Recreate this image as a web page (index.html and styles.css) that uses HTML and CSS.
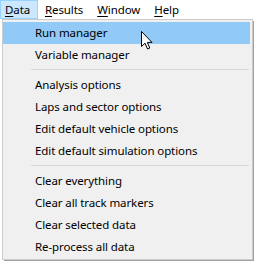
FILE: index.html
```html
<!DOCTYPE html>
<html lang="en">
<head>
  <meta charset="UTF-8">
  <title>Data menu</title>
  <link rel="stylesheet" href="styles.css">
</head>
<body>
  <div class="window">
    <nav class="menubar">
      <span class="menubar-item open"><u>D</u>ata</span>
      <span class="menubar-item"><u>R</u>esults</span>
      <span class="menubar-item"><u>W</u>indow</span>
      <span class="menubar-item"><u>H</u>elp</span>
    </nav>

    <ul class="dropdown">
      <li class="entry hover">Run manager</li>
      <li class="entry">Variable manager</li>
      <li class="divider"></li>
      <li class="entry">Analysis options</li>
      <li class="entry">Laps and sector options</li>
      <li class="entry">Edit default vehicle options</li>
      <li class="entry">Edit default simulation options</li>
      <li class="divider"></li>
      <li class="entry">Clear everything</li>
      <li class="entry">Clear all track markers</li>
      <li class="entry">Clear selected data</li>
      <li class="entry">Re-process all data</li>
    </ul>

    <!-- mouse pointer over the hovered entry -->
    <svg class="cursor" width="12" height="19" viewBox="0 0 12 19">
      <path d="M0.5 0.5 L0.5 15.5 L4 12.2 L6.6 18 L8.8 17 L6.3 11.4 L11 11.4 Z" fill="#fff" stroke="#000" stroke-width="1" stroke-linejoin="miter" />
    </svg>
  </div>
</body>
</html>
```

FILE: styles.css
```css
* {
  margin: 0;
  padding: 0;
  box-sizing: border-box;
}

body {
  font-family: "Noto Sans", "Open Sans", sans-serif;
  font-size: 11.5px;
  letter-spacing: -0.1px;
  color: #000;
  background: #ffffff;
  width: 254px;
  height: 261px;
  overflow: hidden;
}

.window {
  position: relative;
  width: 254px;
  height: 261px;
}

/* Top menu bar */
.menubar {
  display: flex;
  height: 19px;
  background: #ffffff;
}

.menubar-item {
  height: 19px;
  line-height: 17px;
  padding: 0 6px;
  border: 1px solid transparent;
}

.menubar-item:first-child {
  padding-left: 4px;
  width: 38px;
}

.menubar-item u {
  text-decoration-thickness: 1px;
  text-underline-offset: 2px;
}

.menubar-item.open {
  background: #cce8ff;
  border-color: #99d1ff;
}

/* Drop-down list */
.dropdown {
  list-style: none;
  margin-left: 2px;
  width: 251px;
  height: 241px;
  padding: 2px 2px 2px 0;
  background: #f0f0f0;
  border: 1px solid #cccccc;
  box-shadow: 2px 2px 0 #a0a0a0;
}

.entry {
  height: 22px;
  line-height: 22px;
  padding-left: 32px;
  white-space: nowrap;
}

.entry.hover {
  background: #91c9f7;
}

.divider {
  height: 1px;
  margin: 3px 1px 4px 28px;
  background: #d7d7d7;
}

.cursor {
  position: absolute;
  left: 141px;
  top: 31px;
}
```
